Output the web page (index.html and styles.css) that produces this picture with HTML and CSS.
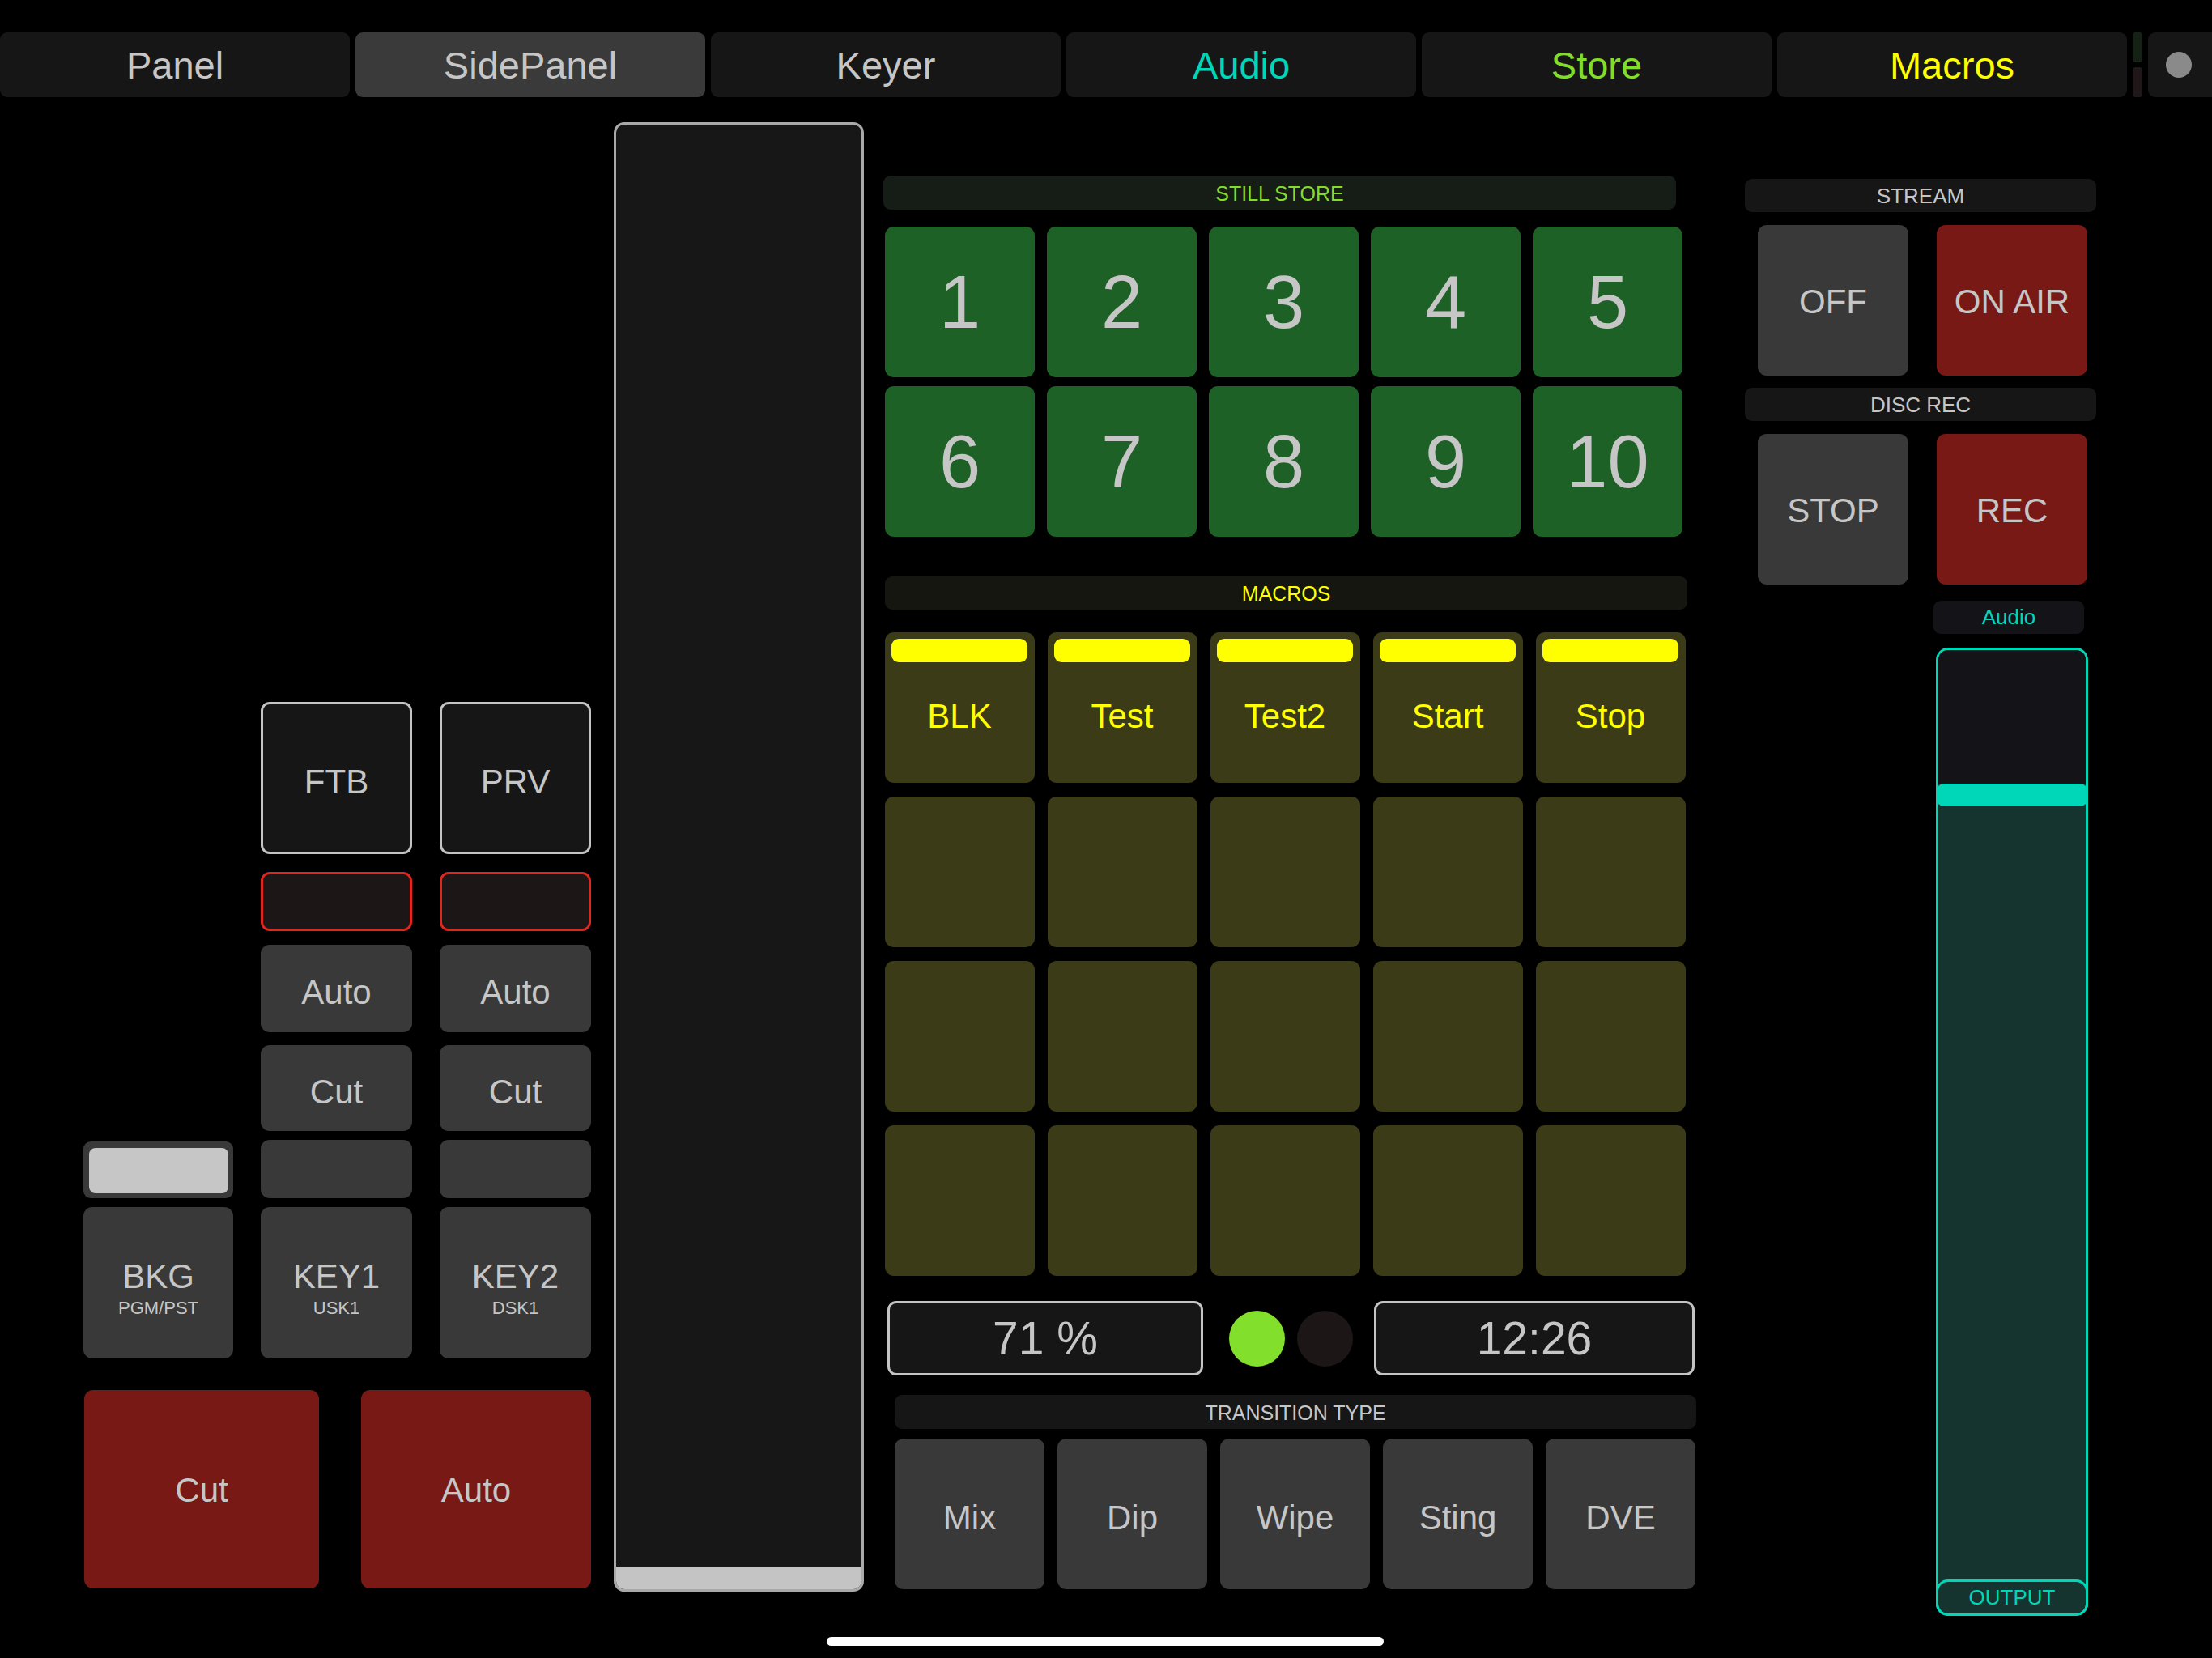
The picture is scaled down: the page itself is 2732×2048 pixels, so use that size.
FILE: index.html
```html
<!DOCTYPE html>
<html>
<head>
<meta charset="utf-8">
<link rel="stylesheet" href="styles.css">
</head>
<body>
<div class="app">
  <nav class="tabs">
    <div class="tab">Panel</div>
    <div class="tab active">SidePanel</div>
    <div class="tab">Keyer</div>
    <div class="tab t-audio">Audio</div>
    <div class="tab t-store">Store</div>
    <div class="tab t-macros">Macros</div>
    <div class="split"><span class="split-top"></span><span class="split-bot"></span></div>
    <div class="tab-dot"><span class="dot"></span></div>
  </nav>

  <main class="main">
    <section class="left">
      <div class="lrow r1">
        <div></div>
        <div class="btn outline">FTB</div>
        <div class="btn outline">PRV</div>
      </div>
      <div class="lrow r2">
        <div></div>
        <div class="redbox"></div>
        <div class="redbox"></div>
      </div>
      <div class="lrow r3">
        <div></div>
        <div class="btn gray">Auto</div>
        <div class="btn gray">Auto</div>
      </div>
      <div class="lrow r4">
        <div></div>
        <div class="btn gray">Cut</div>
        <div class="btn gray">Cut</div>
      </div>
      <div class="lrow r5">
        <div class="mini-slider"><div class="mini-knob"></div></div>
        <div class="btn gray"></div>
        <div class="btn gray"></div>
      </div>
      <div class="lrow r6">
        <div class="btn gray stack"><span class="main-l">BKG</span><span class="sub-l">PGM/PST</span></div>
        <div class="btn gray stack"><span class="main-l">KEY1</span><span class="sub-l">USK1</span></div>
        <div class="btn gray stack"><span class="main-l">KEY2</span><span class="sub-l">DSK1</span></div>
      </div>
      <div class="bigrow">
        <div class="btn red big-cut">Cut</div>
        <div class="btn red big-auto">Auto</div>
      </div>
    </section>

    <section class="tbar"><div class="tbar-fill"></div><div class="tbar-handle"></div></section>

    <section class="center">
      <div class="hdr hdr-still">STILL STORE</div>
      <div class="grid5 still">
        <div class="btn green num">1</div>
        <div class="btn green num">2</div>
        <div class="btn green num">3</div>
        <div class="btn green num">4</div>
        <div class="btn green num">5</div>
        <div class="btn green num">6</div>
        <div class="btn green num">7</div>
        <div class="btn green num">8</div>
        <div class="btn green num">9</div>
        <div class="btn green num">10</div>
      </div>

      <div class="hdr hdr-macros">MACROS</div>
      <div class="grid5 macros">
        <div class="macro"><span class="mbar"></span><span class="mlabel">BLK</span></div>
        <div class="macro"><span class="mbar"></span><span class="mlabel">Test</span></div>
        <div class="macro"><span class="mbar"></span><span class="mlabel">Test2</span></div>
        <div class="macro"><span class="mbar"></span><span class="mlabel">Start</span></div>
        <div class="macro"><span class="mbar"></span><span class="mlabel">Stop</span></div>
        <div class="macro"></div><div class="macro"></div><div class="macro"></div><div class="macro"></div><div class="macro"></div>
        <div class="macro"></div><div class="macro"></div><div class="macro"></div><div class="macro"></div><div class="macro"></div>
        <div class="macro"></div><div class="macro"></div><div class="macro"></div><div class="macro"></div><div class="macro"></div>
      </div>

      <div class="status">
        <div class="readout pct">71 %</div>
        <span class="led led-on"></span>
        <span class="led led-off"></span>
        <div class="readout time">12:26</div>
      </div>

      <div class="hdr hdr-trans">TRANSITION TYPE</div>
      <div class="grid5 trans">
        <div class="btn gray">Mix</div>
        <div class="btn gray">Dip</div>
        <div class="btn gray">Wipe</div>
        <div class="btn gray">Sting</div>
        <div class="btn gray">DVE</div>
      </div>
    </section>

    <section class="right">
      <div class="hdr hdr-gray">STREAM</div>
      <div class="pair">
        <div class="btn gray sq">OFF</div>
        <div class="btn red sq">ON AIR</div>
      </div>
      <div class="hdr hdr-gray hdr-disc">DISC REC</div>
      <div class="pair">
        <div class="btn gray sq">STOP</div>
        <div class="btn red sq">REC</div>
      </div>
      <div class="audio-label">Audio</div>
      <div class="fader">
        <div class="fader-top"></div>
        <div class="fader-handle"></div>
        <div class="fader-bottom">
          <div class="output">OUTPUT</div>
        </div>
      </div>
    </section>
  </main>

  <div class="home-bar"></div>
</div>
</body>
</html>
```

FILE: styles.css
```css
* { box-sizing: border-box; }

html, body {
  margin: 0;
  padding: 0;
  background: #000;
}

body {
  width: 2732px;
  height: 2048px;
  overflow: hidden;
  font-family: "Liberation Sans", Arial, Helvetica, sans-serif;
  color: #c6c6c6;
}

.app {
  position: relative;
  width: 2732px;
  height: 2048px;
}

/* ---------- tabs ---------- */
.tabs {
  display: flex;
  gap: 7px;
  padding-top: 40px;
  height: 120px;
}

.tab {
  flex: none;
  width: 432px;
  height: 80px;
  background: #161616;
  border-radius: 9px;
  display: flex;
  align-items: center;
  justify-content: center;
  font-size: 47px;
  color: #c6c6c6;
}

.tab.active { background: #3a3a3a; }
.t-audio { color: #00d6b8; }
.t-store { color: #82dc2a; }
.t-macros { color: #ffff00; }

.split {
  flex: none;
  width: 12px;
  display: flex;
  flex-direction: column;
  gap: 6px;
}
.split span { flex: 1; border-radius: 3px; }
.split-top { background: #162116; }
.split-bot { background: #201818; }

.tab-dot {
  flex: 1;
  background: #161616;
  border-radius: 9px 0 0 9px;
  display: flex;
  align-items: center;
  padding-left: 22px;
}
.dot {
  width: 32px;
  height: 32px;
  border-radius: 50%;
  background: #8a8a8a;
}

/* ---------- generic buttons ---------- */
.btn {
  display: flex;
  align-items: center;
  justify-content: center;
  border-radius: 11px;
  font-size: 42px;
  color: #c6c6c6;
}
.gray { background: #393939; padding-top: 9px; }
.red { background: #791916; padding-top: 3px; }
.green { background: #1e6126; }
.outline {
  background: #161616;
  border: 3px solid #c4c4c4;
  padding-top: 10px;
}

/* ---------- main ---------- */
.main {
  display: flex;
  align-items: flex-start;
  padding-left: 103px;
}

/* ---------- left ---------- */
.left {
  flex: none;
  width: 627px;
  margin-top: 747px;
  display: flex;
  flex-direction: column;
}

.lrow {
  display: grid;
  grid-template-columns: 185px 187px 187px;
  column-gap: 34px;
}
.r1 { height: 188px; }
.r2 { height: 73px; margin-top: 22px; }
.r3 { height: 108px; margin-top: 17px; }
.r4 { height: 106px; margin-top: 16px; }
.r5 { height: 72px; margin-top: 11px; }
.r6 { height: 187px; margin-top: 11px; }

.redbox {
  border: 3px solid #e1271d;
  background: #1c1616;
  border-radius: 11px;
}

.mini-slider {
  background: #393939;
  border-radius: 9px;
  padding: 8px 6px 6px 7px;
  margin-top: 2px;
}
.mini-knob {
  height: 100%;
  background: #c6c6c6;
  border-radius: 8px;
}

.stack {
  flex-direction: column;
  padding-top: 14px;
}
.main-l {
  font-size: 42px;
  line-height: 44px;
}
.sub-l {
  font-size: 22px;
  line-height: 26px;
  margin-top: 4px;
}

.bigrow {
  display: flex;
  gap: 52px;
  margin-top: 39px;
  padding-left: 1px;
}
.big-cut { width: 290px; height: 245px; }
.big-auto { width: 284px; height: 245px; }

/* ---------- T-bar ---------- */
.tbar {
  flex: none;
  width: 309px;
  height: 1815px;
  margin-left: 28px;
  margin-top: 31px;
  border: 3px solid #a9a9a9;
  border-radius: 13px;
  background: #171717;
  display: flex;
  flex-direction: column;
  overflow: hidden;
}
.tbar-fill { flex: 1; }
.tbar-handle {
  height: 28px;
  background: #c4c4c4;
}

/* ---------- center ---------- */
.center {
  flex: none;
  width: 1004px;
  margin-left: 24px;
  margin-top: 97px;
  display: flex;
  flex-direction: column;
  align-items: flex-start;
}

.hdr {
  height: 42px;
  border-radius: 9px;
  display: flex;
  align-items: center;
  justify-content: center;
  font-size: 25px;
  padding-top: 2px;
}
.hdr-still {
  width: 979px;
  background: #161c16;
  color: #82dc2a;
}
.hdr-macros {
  width: 991px;
  height: 41px;
  margin-top: 49px;
  margin-left: 2px;
  background: #161611;
  color: #ffff00;
}
.hdr-trans {
  width: 990px;
  margin-top: 24px;
  margin-left: 14px;
  background: #161616;
  color: #c6c6c6;
}

.grid5 {
  display: grid;
  grid-template-columns: repeat(5, 185px);
  grid-auto-rows: 186px;
}
.still {
  margin-top: 21px;
  margin-left: 2px;
  column-gap: 15px;
  row-gap: 11px;
}
.num { font-size: 92px; }

.macros {
  margin-top: 28px;
  margin-left: 2px;
  column-gap: 16px;
  row-gap: 17px;
}
.macro {
  background: #3c3b17;
  border-radius: 11px;
  display: flex;
  flex-direction: column;
  padding: 8px 9px 16px 8px;
}
.mbar {
  height: 29px;
  background: #ffff00;
  border-radius: 9px;
  flex: none;
}
.mlabel {
  flex: 1;
  display: flex;
  align-items: center;
  justify-content: center;
  font-size: 42px;
  color: #ffff00;
}

.status {
  display: flex;
  align-items: center;
  margin-top: 31px;
  margin-left: 5px;
  height: 92px;
}
.readout {
  height: 92px;
  border: 3px solid #c4c4c4;
  border-radius: 11px;
  background: #161616;
  display: flex;
  align-items: center;
  justify-content: center;
  font-size: 57px;
  color: #c6c6c6;
}
.pct { width: 390px; }
.time { width: 396px; margin-left: 26px; }
.led {
  width: 69px;
  height: 69px;
  border-radius: 50%;
}
.led-on { background: #82e02c; margin-left: 32px; }
.led-off { background: #1c1616; margin-left: 15px; }

.trans {
  margin-top: 12px;
  margin-left: 14px;
  column-gap: 16px;
}

/* ---------- right ---------- */
.right {
  flex: none;
  width: 434px;
  margin-left: 60px;
  margin-top: 101px;
  display: flex;
  flex-direction: column;
  align-items: flex-start;
}
.hdr-gray {
  width: 434px;
  height: 41px;
  background: #161616;
  color: #c6c6c6;
  font-size: 26px;
}
.hdr-disc { margin-top: 15px; }

.pair {
  display: flex;
  gap: 35px;
  margin-top: 16px;
  padding-left: 16px;
}
.sq {
  width: 186px;
  height: 186px;
}
.pair .gray { padding-top: 4px; }

.audio-label {
  width: 186px;
  height: 41px;
  margin-top: 20px;
  margin-left: 233px;
  border-radius: 9px;
  background: #141418;
  color: #00d6b8;
  font-size: 26px;
  display: flex;
  align-items: center;
  justify-content: center;
}

.fader {
  width: 188px;
  height: 1196px;
  margin-top: 17px;
  margin-left: 236px;
  border: 3px solid #00d6b8;
  border-radius: 15px;
  background: #15332f;
  display: flex;
  flex-direction: column;
}
.fader-top {
  height: 165px;
  background: #141418;
  border-radius: 12px 12px 0 0;
}
.fader-handle {
  height: 28px;
  margin: 0 -3px;
  background: #00d6b8;
  border-radius: 10px;
}
.fader-bottom {
  flex: 1;
  display: flex;
  flex-direction: column;
  justify-content: flex-end;
}
.output {
  height: 45px;
  margin: 0 -3px -3px;
  border: 3px solid #00d6b8;
  border-radius: 15px;
  display: flex;
  align-items: center;
  justify-content: center;
  font-size: 26px;
  color: #00d6b8;
}

/* ---------- home indicator ---------- */
.home-bar {
  position: absolute;
  left: 1021px;
  top: 2022px;
  width: 688px;
  height: 11px;
  border-radius: 6px;
  background: #ffffff;
}
```
